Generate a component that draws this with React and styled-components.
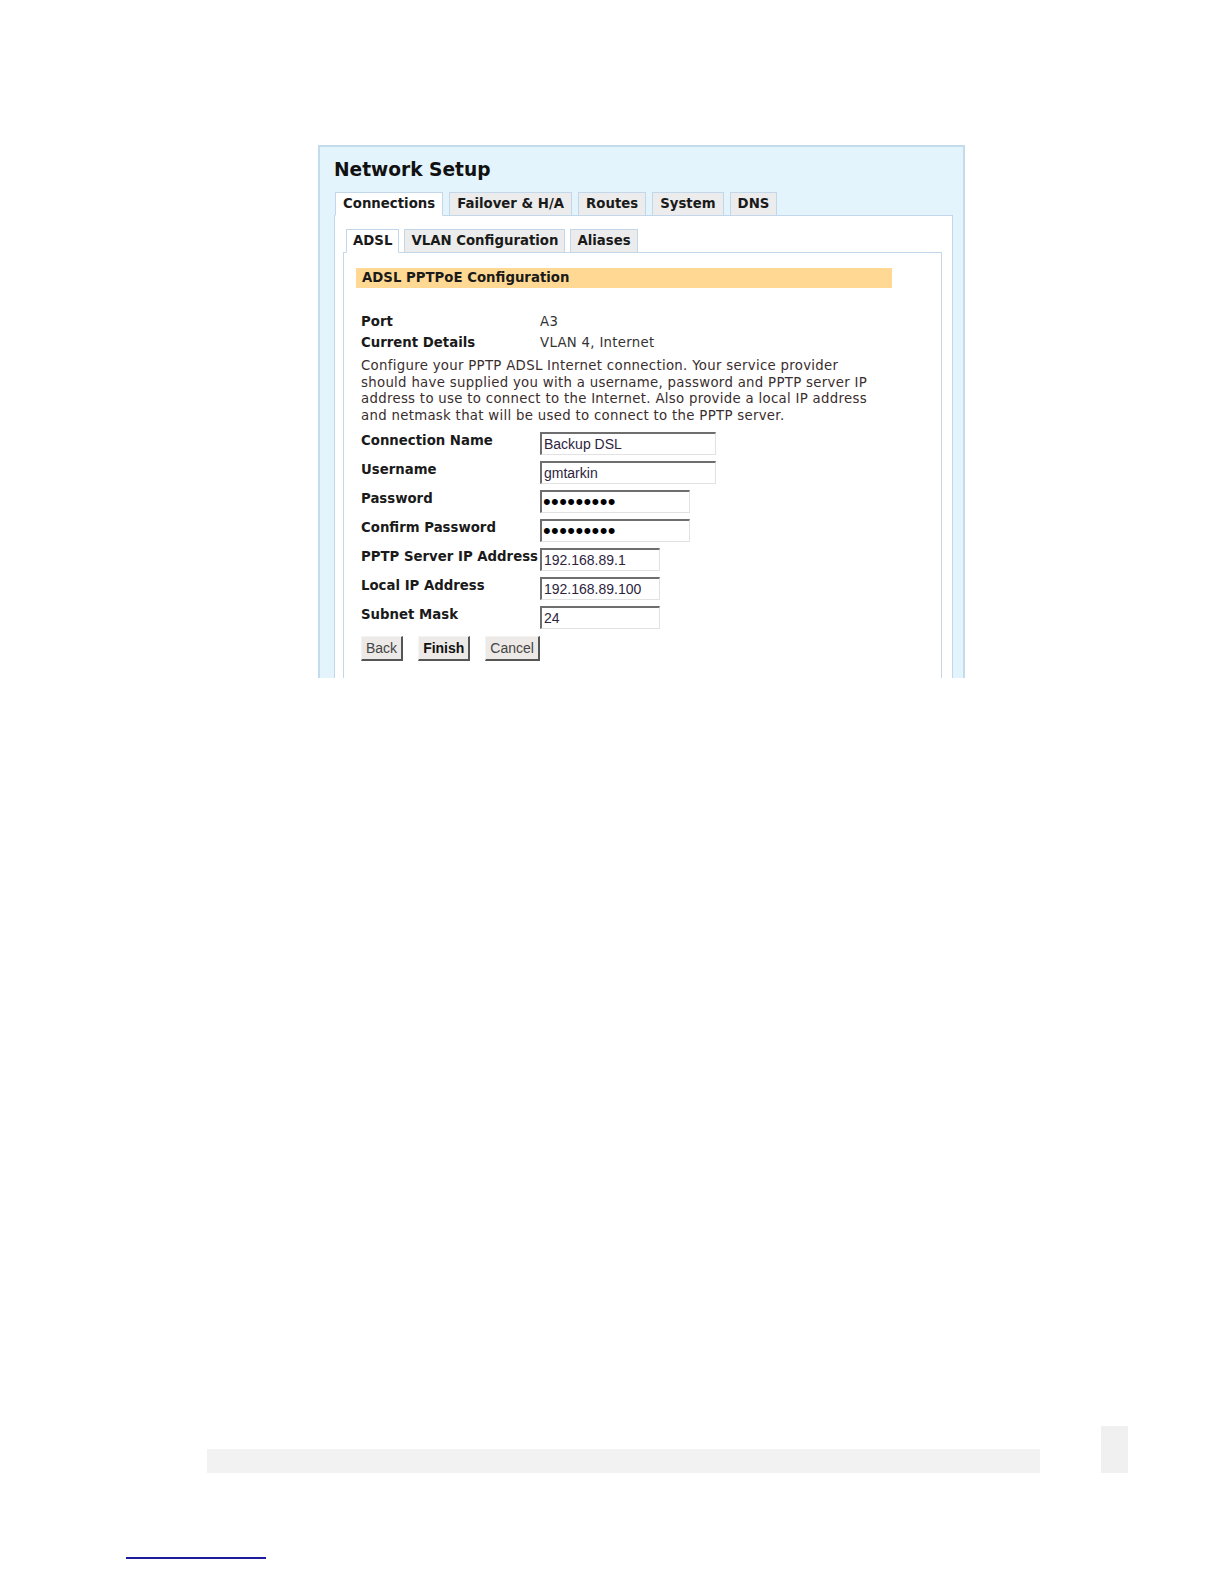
import React from 'react';
import styled, { createGlobalStyle } from 'styled-components';

const GlobalStyle = createGlobalStyle`
  html, body {
    margin: 0;
    padding: 0;
    background: #ffffff;
  }
  body {
    font-family: "DejaVu Sans", Verdana, sans-serif;
  }
`;

const Page = styled.div`
  width: 1224px;
  height: 1584px;
  padding-top: 145px;
  box-sizing: border-box;
`;

const Panel = styled.div`
  margin-left: 318px;
  width: 647px;
  height: 533px;
  box-sizing: border-box;
  background: #e4f4fc;
  border: 2px solid #c2dcee;
  border-bottom: none;
  padding: 10px 10px 0 14px;
  overflow: hidden;
`;

const Title = styled.h1`
  margin: 0;
  font-size: 18.6px;
  line-height: 26px;
  font-weight: bold;
  color: #111;
`;

const TabRow = styled.div`
  display: flex;
  gap: ${p => p.$gap ?? 6}px;
  margin-top: ${p => p.$top ?? 9}px;
  margin-left: ${p => p.$left ?? 0}px;
  position: relative;
  z-index: 1;
`;

const Tab = styled.div`
  font-size: 13.3px;
  font-weight: bold;
  line-height: 22px;
  padding: 0 ${p => p.$pad ?? 7}px;
  color: #1a1a1a;
  background: ${p => (p.$active ? '#ffffff' : '#ececec')};
  border: 1px solid #c2d8ea;
  border-bottom: 1px solid ${p => (p.$active ? '#ffffff' : '#c2d8ea')};
`;

const Box = styled.div`
  background: #ffffff;
  border: 1px solid #c2d8ea;
  border-bottom: none;
  margin-top: -1px;
  height: 600px;
  margin-right: ${p => p.$right ?? 0}px;
  padding: ${p => p.$pad || '0'};
  box-sizing: border-box;
`;

const Header = styled.div`
  width: 536px;
  background: #ffd993;
  font-size: 13.3px;
  font-weight: bold;
  color: #1a1a1a;
  line-height: 20px;
  padding-left: 6px;
  box-sizing: border-box;
`;

const Content = styled.div`
  padding-left: 5px;
  margin-top: 25px;
`;

const InfoGrid = styled.div`
  display: grid;
  grid-template-columns: 179px auto;
  row-gap: 4px;
  font-size: 13.3px;
  line-height: 17px;
`;

const Label = styled.div`
  font-weight: bold;
  color: #1a1a1a;
`;

const Value = styled.div`
  color: #333;
  letter-spacing: 0.3px;
`;

const Intro = styled.p`
  margin: 7px 0 7px;
  font-size: 13.3px;
  line-height: 16.7px;
  letter-spacing: 0.3px;
  color: #3a2e2e;
  white-space: nowrap;
`;

const Form = styled.div`
  display: grid;
  grid-template-columns: 179px auto;
  grid-auto-rows: 29px;
  align-items: start;
`;

const FieldLabel = styled.label`
  font-size: 13.3px;
  font-weight: bold;
  line-height: 18px;
  color: #1a1a1a;
  white-space: nowrap;
`;

const Input = styled.input`
  width: ${p => p.$w}px;
  height: 23px;
  box-sizing: border-box;
  margin: 0;
  padding: 1px 2px 0;
  font-family: "Liberation Sans", Arial, sans-serif;
  font-size: 14px;
  color: #2e2440;
  background: #ffffff;
  border-style: solid;
  border-width: 2px 1px 1px 2px;
  border-color: #6e6e6e #e2e2e2 #e2e2e2 #6e6e6e;
  outline: none;
  &[type='password'] {
    font-size: 22px;
    letter-spacing: 0.4px;
    padding: 0 1px;
    color: #000;
  }
`;

const Buttons = styled.div`
  display: flex;
  gap: 15px;
  margin-top: 1px;
`;

const Button = styled.button`
  height: 25px;
  padding: 0 4px;
  margin: 0;
  font-family: "Liberation Sans", Arial, sans-serif;
  font-size: 14px;
  font-weight: ${p => (p.$primary ? 'bold' : 'normal')};
  color: ${p => (p.$primary ? '#111' : '#444')};
  background: #ece9e6;
  border-style: solid;
  border-width: 1px 2px 2px 1px;
  border-color: #f4f4f4 #555 #555 #f4f4f4;
  border-radius: 0;
`;

const Footer = styled.div`
  display: flex;
  align-items: flex-end;
  gap: 61px;
  margin-top: 748px;
  margin-left: 207px;
`;

const Bar = styled.div`
  width: 833px;
  height: 24px;
  background: #f2f2f2;
`;

const Block = styled.div`
  width: 27px;
  height: 47px;
  background: #f0f0f0;
`;

const Rule = styled.div`
  width: 140px;
  height: 2px;
  background: #1c1c9c;
  margin: 84px 0 0 126px;
`;

const fields = [
  { label: 'Connection Name', value: 'Backup DSL', width: 176 },
  { label: 'Username', value: 'gmtarkin', width: 176 },
  { label: 'Password', value: 'secretpwd', width: 150, type: 'password' },
  { label: 'Confirm Password', value: 'secretpwd', width: 150, type: 'password' },
  { label: 'PPTP Server IP Address', value: '192.168.89.1', width: 120 },
  { label: 'Local IP Address', value: '192.168.89.100', width: 120 },
  { label: 'Subnet Mask', value: '24', width: 120 },
];

export default function App() {
  return (
    <Page>
      <GlobalStyle />
      <Panel>
        <Title>Network Setup</Title>
        <TabRow $top={9} $left={1}>
          <Tab $active>Connections</Tab>
          <Tab>Failover &amp; H/A</Tab>
          <Tab>Routes</Tab>
          <Tab>System</Tab>
          <Tab>DNS</Tab>
        </TabRow>
        <Box $pad="13px 0 0 8px">
          <TabRow $top={0} $left={3} $gap={5}>
            <Tab $active $pad={6}>ADSL</Tab>
            <Tab $pad={6}>VLAN Configuration</Tab>
            <Tab $pad={6}>Aliases</Tab>
          </TabRow>
          <Box $right={10} $pad="15px 0 0 12px">
            <Header>ADSL PPTPoE Configuration</Header>
            <Content>
              <InfoGrid>
                <Label>Port</Label>
                <Value>A3</Value>
                <Label>Current Details</Label>
                <Value>VLAN 4, Internet</Value>
              </InfoGrid>
              <Intro>
                Configure your PPTP ADSL Internet connection. Your service provider<br />
                should have supplied you with a username, password and PPTP server IP<br />
                address to use to connect to the Internet. Also provide a local IP address<br />
                and netmask that will be used to connect to the PPTP server.
              </Intro>
              <Form>
                {fields.map(f => (
                  <React.Fragment key={f.label}>
                    <FieldLabel>{f.label}</FieldLabel>
                    <Input
                      type={f.type || 'text'}
                      defaultValue={f.value}
                      $w={f.width}
                      aria-label={f.label}
                    />
                  </React.Fragment>
                ))}
              </Form>
              <Buttons>
                <Button>Back</Button>
                <Button $primary>Finish</Button>
                <Button>Cancel</Button>
              </Buttons>
            </Content>
          </Box>
        </Box>
      </Panel>
      <Footer>
        <Bar />
        <Block />
      </Footer>
      <Rule />
    </Page>
  );
}
